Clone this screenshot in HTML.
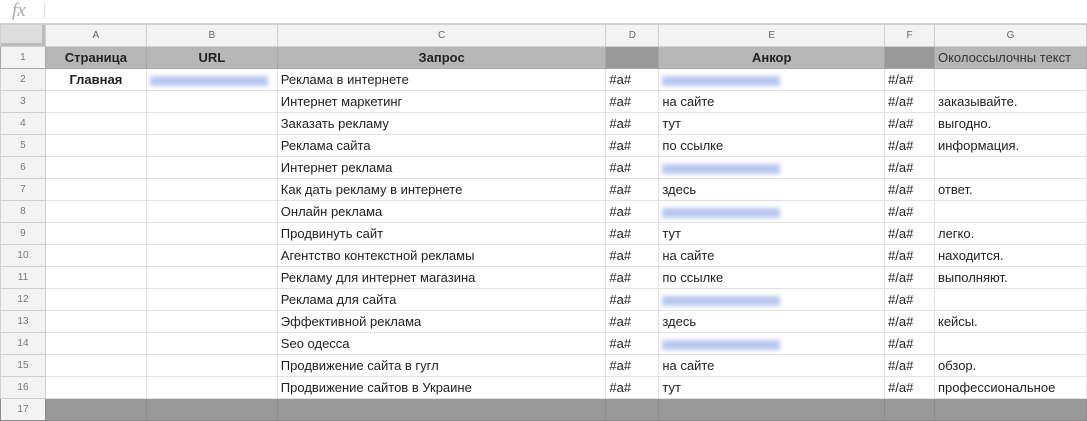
<!DOCTYPE html><html><head><meta charset="utf-8"><style>
body{margin:0;width:1087px;height:421px;overflow:hidden;background:#fff;font-family:"Liberation Sans",Arial,sans-serif;}
.fx{position:absolute;left:0;top:0;width:1087px;height:23px;border-bottom:1px solid #d0d0d0;background:#fff}
.fx i{position:absolute;left:12px;top:0;font-family:"Liberation Serif",serif;font-size:19px;color:#aaa}
.fx b{position:absolute;left:44px;top:3px;width:1px;height:16px;background:#ddd}
table{position:absolute;left:0;top:24px;border-collapse:collapse;table-layout:fixed;font-size:13px;color:#222}
td{border:1px solid #e2e2e2;height:21px;padding:0 3px;white-space:nowrap;overflow:hidden}
tr.h td{background:#f3f3f3;color:#666;font-size:10px;text-align:center;border-color:#cfcfcf}
td.n{background:#f3f3f3;color:#777;font-size:10px;text-align:center;border-color:#cfcfcf}
tr.r1 td{background:#b7b7b7;font-weight:bold;text-align:center;border-color:#a8a8a8}
tr.r1 td.d{background:#999}
tr.r1 td.g{font-weight:normal;text-align:left;color:#333}
tr.r1 td.n{background:#f3f3f3;font-weight:normal}
tr.r17 td{background:#999;border-color:#8a8a8a}
tr.r17 td.n{background:#f3f3f3}
.bl{display:inline-block;width:118px;height:10px;background:#b8c8f0;filter:blur(2px);vertical-align:middle}
.corner{background:#ddd!important;box-shadow:inset -3px -3px 0 #bbb}
</style></head><body>
<div class="fx"><i>fx</i><b></b></div>
<table>
<colgroup><col style="width:45px"><col style="width:101px"><col style="width:131px"><col style="width:329px"><col style="width:53px"><col style="width:226px"><col style="width:50px"><col style="width:152px"></colgroup>
<tr class="h"><td class="corner"></td><td>A</td><td>B</td><td>C</td><td>D</td><td>E</td><td>F</td><td>G</td></tr>
<tr class="r1"><td class="n">1</td><td>Страница</td><td>URL</td><td>Запрос</td><td class="d"></td><td>Анкор</td><td class="d"></td><td class="g">Околоссылочны текст</td></tr>
<tr><td class="n">2</td><td style="text-align:center;font-weight:bold">Главная</td><td><span class="bl"></span></td><td>Реклама в интернете</td><td>#a#</td><td><span class="bl"></span></td><td>#/a#</td><td></td></tr>
<tr><td class="n">3</td><td></td><td></td><td>Интернет маркетинг</td><td>#a#</td><td>на сайте</td><td>#/a#</td><td>заказывайте.</td></tr>
<tr><td class="n">4</td><td></td><td></td><td>Заказать рекламу</td><td>#a#</td><td>тут</td><td>#/a#</td><td>выгодно.</td></tr>
<tr><td class="n">5</td><td></td><td></td><td>Реклама сайта</td><td>#a#</td><td>по ссылке</td><td>#/a#</td><td>информация.</td></tr>
<tr><td class="n">6</td><td></td><td></td><td>Интернет реклама</td><td>#a#</td><td><span class="bl"></span></td><td>#/a#</td><td></td></tr>
<tr><td class="n">7</td><td></td><td></td><td>Как дать рекламу в интернете</td><td>#a#</td><td>здесь</td><td>#/a#</td><td>ответ.</td></tr>
<tr><td class="n">8</td><td></td><td></td><td>Онлайн реклама</td><td>#a#</td><td><span class="bl"></span></td><td>#/a#</td><td></td></tr>
<tr><td class="n">9</td><td></td><td></td><td>Продвинуть сайт</td><td>#a#</td><td>тут</td><td>#/a#</td><td>легко.</td></tr>
<tr><td class="n">10</td><td></td><td></td><td>Агентство контекстной рекламы</td><td>#a#</td><td>на сайте</td><td>#/a#</td><td>находится.</td></tr>
<tr><td class="n">11</td><td></td><td></td><td>Рекламу для интернет магазина</td><td>#a#</td><td>по ссылке</td><td>#/a#</td><td>выполняют.</td></tr>
<tr><td class="n">12</td><td></td><td></td><td>Реклама для сайта</td><td>#a#</td><td><span class="bl"></span></td><td>#/a#</td><td></td></tr>
<tr><td class="n">13</td><td></td><td></td><td>Эффективной реклама</td><td>#a#</td><td>здесь</td><td>#/a#</td><td>кейсы.</td></tr>
<tr><td class="n">14</td><td></td><td></td><td>Seo одесса</td><td>#a#</td><td><span class="bl"></span></td><td>#/a#</td><td></td></tr>
<tr><td class="n">15</td><td></td><td></td><td>Продвижение сайта в гугл</td><td>#a#</td><td>на сайте</td><td>#/a#</td><td>обзор.</td></tr>
<tr><td class="n">16</td><td></td><td></td><td>Продвижение сайтов в Украине</td><td>#a#</td><td>тут</td><td>#/a#</td><td>профессиональное</td></tr>
<tr class="r17"><td class="n">17</td><td></td><td></td><td></td><td></td><td></td><td></td><td></td></tr>
</table>
</body></html>
